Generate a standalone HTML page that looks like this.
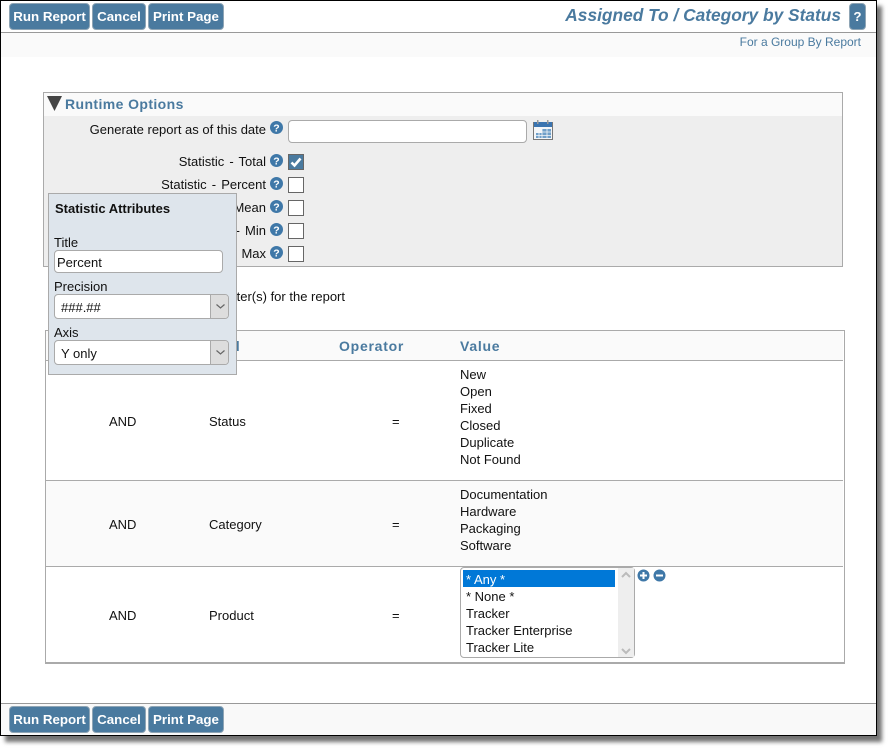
<!DOCTYPE html>
<html><head><meta charset="utf-8">
<style>
html,body{margin:0;padding:0;background:#fff}
body{width:891px;height:751px;position:relative;overflow:hidden;font:13px/14px "Liberation Sans",sans-serif;color:#111}
.a{position:absolute;white-space:nowrap}
.frame{position:absolute;left:0;top:0;width:875px;height:734px;border:1px solid #000;background:#fff;box-shadow:5px 6px 4px rgba(0,0,0,.55)}
.btn{position:absolute;height:25px;line-height:25px;background:#4a7a9f;border:1px solid #8fa5b5;border-radius:4px;color:#fff;font-weight:bold;font-size:13.33px;text-align:center;box-sizing:content-box}
.r{position:absolute;text-align:right;right:625px;white-space:nowrap}
.w{word-spacing:1.500px}
.cb{position:absolute;left:288px;width:14px;height:14px;border:1px solid #666;background:#fff}
.q{position:absolute;left:270px;width:13px;height:13px}
.th{position:absolute;top:339px;font-weight:bold;font-size:14px;letter-spacing:.75px;color:#4a7a9f;white-space:nowrap}
.ln{position:absolute;left:460px;font-size:13px;line-height:17px;white-space:nowrap}
.inp{position:absolute;background:#fff;border:1px solid #aaa;border-radius:4px;box-sizing:border-box}
.sel-arrow{position:absolute;right:0;top:0;bottom:0;width:17px;background:#ddd;border-left:1px solid #aaa;border-radius:0 3px 3px 0}
</style></head><body>
<div class="frame"></div>

<div class="a" style="left:1px;top:32px;width:875px;height:1px;background:#999"></div>
<div class="a" style="left:1px;top:33px;width:875px;height:24px;background:#fafafa"></div>
<div class="btn" style="left:9px;top:3px;width:79px">Run Report</div>
<div class="btn" style="left:92px;top:3px;width:52px">Cancel</div>
<div class="btn" style="left:148px;top:3px;width:74px">Print Page</div>
<div class="a" style="right:50px;top:6px;font:italic bold 17.33px/19px 'Liberation Sans',sans-serif;color:#4a7a9f">Assigned To / Category by Status</div>
<div class="btn" style="left:849px;top:3px;width:15px;">?</div>
<div class="a" style="right:30px;top:35px;color:#4a7a9f;font-size:12px">For a Group By Report</div>

<div class="a" style="left:43px;top:92px;width:798px;height:173px;border:1px solid #aaa;background:#eee"></div>
<div class="a" style="left:44px;top:93px;width:798px;height:23px;background:#fafafa"></div>
<svg class="a" style="left:47px;top:96px" width="15" height="15"><path d="M0 0H15L7.500 15Z" fill="#444"/></svg>
<div class="a" style="left:65px;top:96px;font-weight:bold;font-size:14px;letter-spacing:.4px;line-height:16px;color:#4a7a9f">Runtime Options</div>

<div class="r" style="top:123px">Generate report as of this date</div>
<div class="r w" style="top:155px">Statistic - Total</div>
<div class="r w" style="top:178px">Statistic - Percent</div>
<div class="r w" style="top:201px">Statistic - Mean</div>
<div class="r w" style="top:224px">Statistic - Min</div>
<div class="r w" style="top:247px">Statistic - Max</div>

<svg class="q" style="top:121px" viewBox="0 0 13 13"><circle cx="6.500" cy="6.500" r="6.500" fill="#3f78a8"/><text x="6.500" y="10.500" font-family="Liberation Sans" font-size="10.500" font-weight="bold" fill="#fff" text-anchor="middle">?</text></svg>
<svg class="q" style="top:154px" viewBox="0 0 13 13"><circle cx="6.500" cy="6.500" r="6.500" fill="#3f78a8"/><text x="6.500" y="10.500" font-family="Liberation Sans" font-size="10.500" font-weight="bold" fill="#fff" text-anchor="middle">?</text></svg>
<svg class="q" style="top:177px" viewBox="0 0 13 13"><circle cx="6.500" cy="6.500" r="6.500" fill="#3f78a8"/><text x="6.500" y="10.500" font-family="Liberation Sans" font-size="10.500" font-weight="bold" fill="#fff" text-anchor="middle">?</text></svg>
<svg class="q" style="top:200px" viewBox="0 0 13 13"><circle cx="6.500" cy="6.500" r="6.500" fill="#3f78a8"/><text x="6.500" y="10.500" font-family="Liberation Sans" font-size="10.500" font-weight="bold" fill="#fff" text-anchor="middle">?</text></svg>
<svg class="q" style="top:223px" viewBox="0 0 13 13"><circle cx="6.500" cy="6.500" r="6.500" fill="#3f78a8"/><text x="6.500" y="10.500" font-family="Liberation Sans" font-size="10.500" font-weight="bold" fill="#fff" text-anchor="middle">?</text></svg>
<svg class="q" style="top:246px" viewBox="0 0 13 13"><circle cx="6.500" cy="6.500" r="6.500" fill="#3f78a8"/><text x="6.500" y="10.500" font-family="Liberation Sans" font-size="10.500" font-weight="bold" fill="#fff" text-anchor="middle">?</text></svg>

<div class="inp" style="left:288px;top:120px;width:239px;height:23px"></div>
<svg class="a" style="left:533px;top:120px" width="20" height="20" viewBox="0 0 20 20"><rect x=".5" y="2.500" width="19" height="17" fill="#f4f6f8" stroke="#777"/><rect x="1" y="2" width="18" height="5" fill="#3a74b0"/><rect x="4" y="0" width="1.500" height="4" fill="#999"/><rect x="14" y="0" width="1.500" height="4" fill="#999"/><path d="M9 9H18V18H3V13H9Z" fill="#6f9fc9"/><path d="M3 15.500H18M14 9V18M9 9V18M6 13V18M9 12H18" stroke="#f4f6f8" stroke-width=".8" fill="none"/></svg>

<div class="cb" style="top:154px;background:#4a7a9f"></div>
<svg class="a" style="left:288px;top:154px" width="16" height="16"><path d="M3.500 8.500L6.500 11.500L12.500 4.500" fill="none" stroke="#fff" stroke-width="2.600"/></svg>
<div class="cb" style="top:177px"></div>
<div class="cb" style="top:200px"></div>
<div class="cb" style="top:223px"></div>
<div class="cb" style="top:246px"></div>

<div class="a" style="right:546px;top:290px">Select the filter(s) for the report</div>

<div class="a" style="left:45px;top:330px;width:798px;height:331px;border:1px solid #aaa;border-bottom:2px solid #aaa"></div>
<div class="a" style="left:46px;top:331px;width:797px;height:29px;background:#fafafa"></div>
<div class="a" style="left:46px;top:360px;width:797px;height:1px;background:#aaa"></div>
<div class="a" style="left:46px;top:480px;width:797px;height:1px;background:#aaa"></div>
<div class="a" style="left:46px;top:481px;width:797px;height:85px;background:#fafafa"></div>
<div class="a" style="left:46px;top:566px;width:797px;height:1px;background:#aaa"></div>
<div class="th" style="left:204px">Field</div>
<div class="th" style="left:339px">Operator</div>
<div class="th" style="left:460px">Value</div>

<div class="a" style="left:109px;top:415px">AND</div>
<div class="a" style="left:209px;top:415px">Status</div>
<div class="a" style="left:392px;top:415px">=</div>
<div class="ln" style="top:366px">New<br>Open<br>Fixed<br>Closed<br>Duplicate<br>Not Found</div>

<div class="a" style="left:109px;top:518px">AND</div>
<div class="a" style="left:209px;top:518px">Category</div>
<div class="a" style="left:392px;top:518px">=</div>
<div class="ln" style="top:486px">Documentation<br>Hardware<br>Packaging<br>Software</div>

<div class="a" style="left:109px;top:609px">AND</div>
<div class="a" style="left:209px;top:609px">Product</div>
<div class="a" style="left:392px;top:609px">=</div>

<div class="inp" style="left:460px;top:567px;width:175px;height:91px"></div>
<div class="a" style="left:618px;top:568px;width:16px;height:89px;background:#eee"></div>
<svg class="a" style="left:618px;top:568px" width="16" height="89"><path d="M4 9L8 5L12 9M4 81L8 85L12 81" fill="none" stroke="#bbb" stroke-width="2"/></svg>
<div class="a" style="left:463px;top:570px;width:152px;height:17px;background:#0078d7"></div>
<div class="a" style="left:466px;top:571px;line-height:17px;color:#fff">* Any *</div>
<div class="a" style="left:466px;top:588px;line-height:17px">* None *</div>
<div class="a" style="left:466px;top:605px;line-height:17px">Tracker</div>
<div class="a" style="left:466px;top:622px;line-height:17px">Tracker Enterprise</div>
<div class="a" style="left:466px;top:639px;line-height:17px">Tracker Lite</div>
<svg class="a" style="left:637px;top:569px" width="30" height="13"><circle cx="6.500" cy="6.500" r="6" fill="#3f78a8"/><path d="M3 6.500H10M6.500 3V10" stroke="#fff" stroke-width="2"/><circle cx="22.500" cy="6.500" r="6" fill="#3f78a8"/><path d="M19 6.500H26" stroke="#fff" stroke-width="2"/></svg>

<div class="a" style="left:48px;top:193px;width:187px;height:180px;background:#dee5ec;border:1px solid #aaa"></div>
<div class="a" style="left:55px;top:202px;font-weight:bold">Statistic Attributes</div>
<div class="a" style="left:54px;top:236px">Title</div>
<div class="inp" style="left:54px;top:250px;width:169px;height:23px"></div>
<div class="a" style="left:57px;top:256px">Percent</div>
<div class="a" style="left:54px;top:280px">Precision</div>
<div class="inp" style="left:54px;top:294px;width:175px;height:25px"><div class="sel-arrow"></div></div>
<div class="a" style="left:61px;top:301px">###.##</div>
<div class="a" style="left:54px;top:326px">Axis</div>
<div class="inp" style="left:54px;top:340px;width:175px;height:25px"><div class="sel-arrow"></div></div>
<div class="a" style="left:61px;top:347px">Y only</div>
<svg class="a" style="left:212px;top:294px" width="17" height="71"><path d="M4.500 10.500L8.500 14L12.500 10.500M4.500 56.500L8.500 60L12.500 56.500" fill="none" stroke="#666" stroke-width="1.200"/></svg>

<div class="a" style="left:1px;top:703px;width:875px;height:1px;background:#999"></div>
<div class="a" style="left:1px;top:704px;width:875px;height:31px;background:#f9f9f9"></div>
<div class="btn" style="left:9px;top:706px;width:79px">Run Report</div>
<div class="btn" style="left:92px;top:706px;width:52px">Cancel</div>
<div class="btn" style="left:148px;top:706px;width:74px">Print Page</div>
</body></html>
